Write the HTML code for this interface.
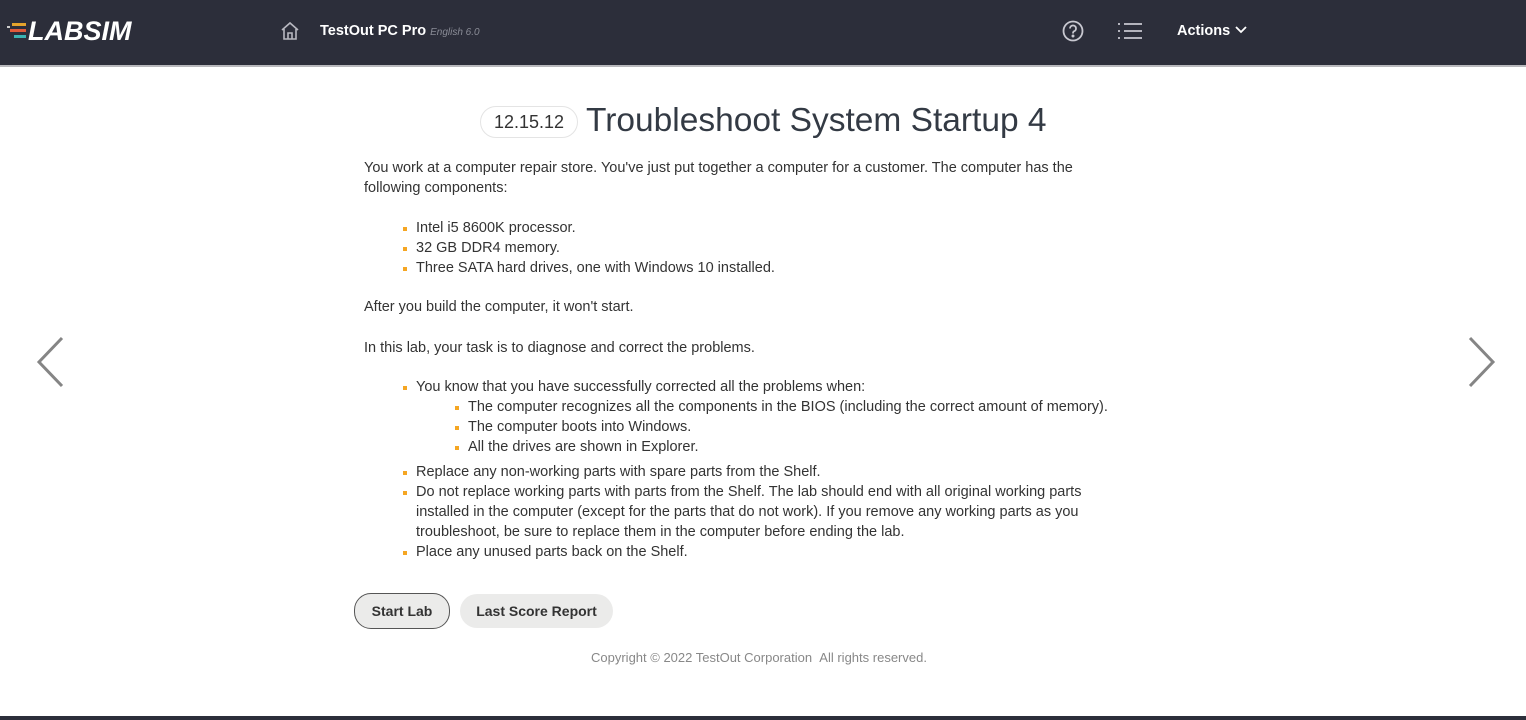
<!DOCTYPE html>
<html><head><meta charset="utf-8"><style>
body{margin:0;width:1526px;height:720px;overflow:hidden;background:#fff;font-family:"Liberation Sans",sans-serif;color:#333;position:relative}
.hdr{position:absolute;left:0;top:0;width:1526px;height:65px;background:#2c2e3a;border-bottom:2px solid #b8b8bc}
.logo{position:absolute;left:28px;top:16px;color:#fff;font-weight:bold;font-style:italic;font-size:27px;letter-spacing:0px}
.t{position:absolute;color:#fff;font-weight:bold;font-size:14.5px}
.p{position:absolute;left:364px;font-size:14.5px;line-height:20px;margin:0}
ul{margin:0;padding:0;list-style:none}
li{position:relative;font-size:14.5px;line-height:20px}
li:before{content:"";position:absolute;left:-13px;top:9px;width:4px;height:4px;background:#f5a623}
.btn{position:absolute;top:594px;height:34px;border-radius:17px;background:#ebebea;font-weight:bold;font-size:14px;line-height:34px;text-align:center;color:#333}
.arr{position:absolute;top:336px}
</style></head><body>
<div class="hdr">
 <div style="position:absolute;left:7px;top:26px;width:3px;height:2px;background:#ccc"></div>
 <div style="position:absolute;left:12px;top:23px;width:14px;height:3px;background:#e4a32c"></div>
 <div style="position:absolute;left:10px;top:29px;width:16px;height:3px;background:#e05a3a"></div>
 <div style="position:absolute;left:14px;top:35px;width:12px;height:3px;background:#3bb3b3"></div>
 <div class="logo">LABSIM</div>
 <svg style="position:absolute;left:280px;top:21px" width="20" height="20" viewBox="0 0 20 20" fill="none" stroke="#b8b8c0" stroke-width="1.6"><path d="M2 9 L10 2 L18 9 M4 8 V18 H16 V8 M8 18 V12 H12 V18"/></svg>
 <div class="t" style="left:320px;top:23px">TestOut PC Pro <span style="font-weight:normal;font-style:italic;font-size:10px;color:#8a8c96">English 6.0</span></div>
 <svg style="position:absolute;left:1062px;top:20px" width="22" height="22" viewBox="0 0 22 22" fill="none" stroke="#c8c8d0" stroke-width="1.8"><circle cx="11" cy="11" r="9.5"/><path d="M8 8.5 a3 3 0 1 1 4 2.8 c-1 .4 -1 1 -1 2.2"/><circle cx="11" cy="16" r=".6" fill="#c8c8d0"/></svg>
 <svg style="position:absolute;left:1118px;top:22px" width="24" height="18" viewBox="0 0 24 18" stroke="#c8c8d0" stroke-width="1.8"><path d="M0 2h2M0 9h2M0 16h2M6 2h18M6 9h18M6 16h18"/></svg>
 <div class="t" style="left:1177px;top:23px">Actions</div>
 <svg style="position:absolute;left:1235px;top:26px" width="12" height="8" viewBox="0 0 12 8" fill="none" stroke="#fff" stroke-width="1.8"><path d="M1 1 L6 6 L11 1"/></svg>
</div>
<div style="position:absolute;left:480px;top:106px;width:96px;height:30px;border:1px solid #e4e4e4;border-radius:16px;text-align:center;line-height:30px;font-size:18px;color:#333">12.15.12</div>
<div style="position:absolute;left:586px;top:102px;font-size:33.5px;color:#333a44">Troubleshoot System Startup 4</div>
<p class="p" style="top:158px;width:740px">You work at a computer repair store. You've just put together a computer for a customer. The computer has the following components:</p>
<ul class="p" style="left:416px;top:218px"><li>Intel i5 8600K processor.</li><li>32 GB DDR4 memory.</li><li>Three SATA hard drives, one with Windows 10 installed.</li></ul>
<p class="p" style="top:297px">After you build the computer, it won't start.</p>
<p class="p" style="top:338px">In this lab, your task is to diagnose and correct the problems.</p>
<ul class="p" style="left:416px;top:377px;width:720px">
<li>You know that you have successfully corrected all the problems when:
<ul style="margin-left:52px;width:740px"><li>The computer recognizes all the components in the BIOS (including the correct amount of memory).</li><li>The computer boots into Windows.</li><li>All the drives are shown in Explorer.</li></ul></li>
<li style="margin-top:5px">Replace any non-working parts with spare parts from the Shelf.</li>
<li>Do not replace working parts with parts from the Shelf. The lab should end with all original working parts installed in the computer (except for the parts that do not work). If you remove any working parts as you troubleshoot, be sure to replace them in the computer before ending the lab.</li>
<li>Place any unused parts back on the Shelf.</li></ul>
<div class="btn" style="left:354px;width:94px;border:1px solid #555;top:593px">Start Lab</div>
<div class="btn" style="left:460px;width:153px">Last Score Report</div>
<div style="position:absolute;left:591px;top:650px;font-size:13px;color:#888">Copyright © 2022 TestOut Corporation &nbsp;All rights reserved.</div>
<svg class="arr" style="left:34px" width="32" height="52" viewBox="0 0 32 52" fill="none" stroke="#858585" stroke-width="3"><path d="M28 2 L5 26 L28 50"/></svg>
<svg class="arr" style="left:1466px" width="32" height="52" viewBox="0 0 32 52" fill="none" stroke="#858585" stroke-width="3"><path d="M4 2 L27 26 L4 50"/></svg>
<div style="position:absolute;left:0;top:716px;width:1526px;height:4px;background:#2c2e3a"></div>
</body></html>
